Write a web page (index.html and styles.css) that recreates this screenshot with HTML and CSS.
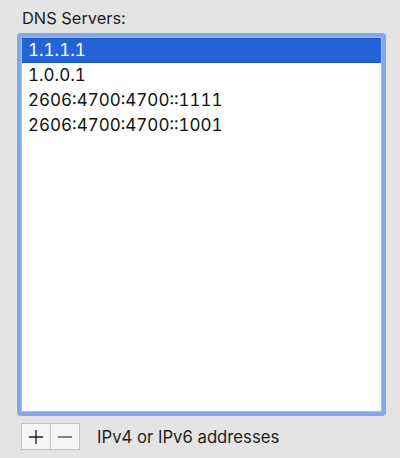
FILE: index.html
```html
<!DOCTYPE html>
<html>
<head>
<meta charset="utf-8">
<link rel="stylesheet" href="styles.css">
</head>
<body>
<div class="pane">
  <div class="label">DNS Servers:</div>
  <div class="ring">
    <div class="list">
      <div class="row selected">1.1.1.1</div>
      <div class="row">1.0.0.1</div>
      <div class="row">2606:4700:4700::1111</div>
      <div class="row">2606:4700:4700::1001</div>
    </div>
  </div>
  <div class="footer">
    <div class="seg">
      <button class="btn" aria-label="Add">
        <svg width="16" height="16" viewBox="0 0 16 16"><path d="M8 1v14M1 8h14" stroke="#1a1a1a" stroke-width="1.3" fill="none"/></svg>
      </button>
      <button class="btn" aria-label="Remove">
        <svg width="16" height="16" viewBox="0 0 16 16"><path d="M1 8h14" stroke="#444" stroke-width="1.3" fill="none"/></svg>
      </button>
    </div>
    <div class="hint">IPv4 or IPv6 addresses</div>
  </div>
</div>
</body>
</html>
```
FILE: styles.css
```css
html, body {
  margin: 0;
  padding: 0;
  background: #e4e4e4;
}
body {
  width: 400px;
  height: 458px;
  overflow: hidden;
  font-family: Inter, "Liberation Sans", sans-serif;
  color: #1e1e1e;
}
.pane {
  padding: 8px 0 0 17px;
}
.label {
  font-size: 16.4px;
  line-height: 20px;
  padding-left: 5px;
  height: 25px;
}
.ring {
  width: 361px;
  height: 375px;
  border: 4px solid #82a8ea;
  border-radius: 4px;
}
.list {
  height: 373px;
  border: 1px solid #a9bde0;
  background: #fff;
  font-size: 17px;
  font-feature-settings: "tnum";
}
.row {
  height: 25px;
  line-height: 25px;
  padding-left: 6px;
  color: #111;
}
.row.selected {
  height: 23px;
  line-height: 23px;
  background: #2463d8;
  border-top: 1px solid #1b56c7;
  border-bottom: 1px solid #1b56c7;
  color: #fff;
}
.footer {
  display: flex;
  align-items: center;
  margin-top: 7px;
  padding-left: 4px;
}
.seg {
  display: flex;
  border: 1px solid #c2c2c2;
  background: #c2c2c2;
  gap: 1px;
}
.btn {
  width: 28px;
  height: 25px;
  padding: 0;
  margin: 0;
  border: 0;
  background: #f5f5f5;
  display: flex;
  align-items: center;
  justify-content: center;
}
.hint {
  margin-left: 17px;
  font-size: 16.7px;
  color: #1e1e1e;
}
```
